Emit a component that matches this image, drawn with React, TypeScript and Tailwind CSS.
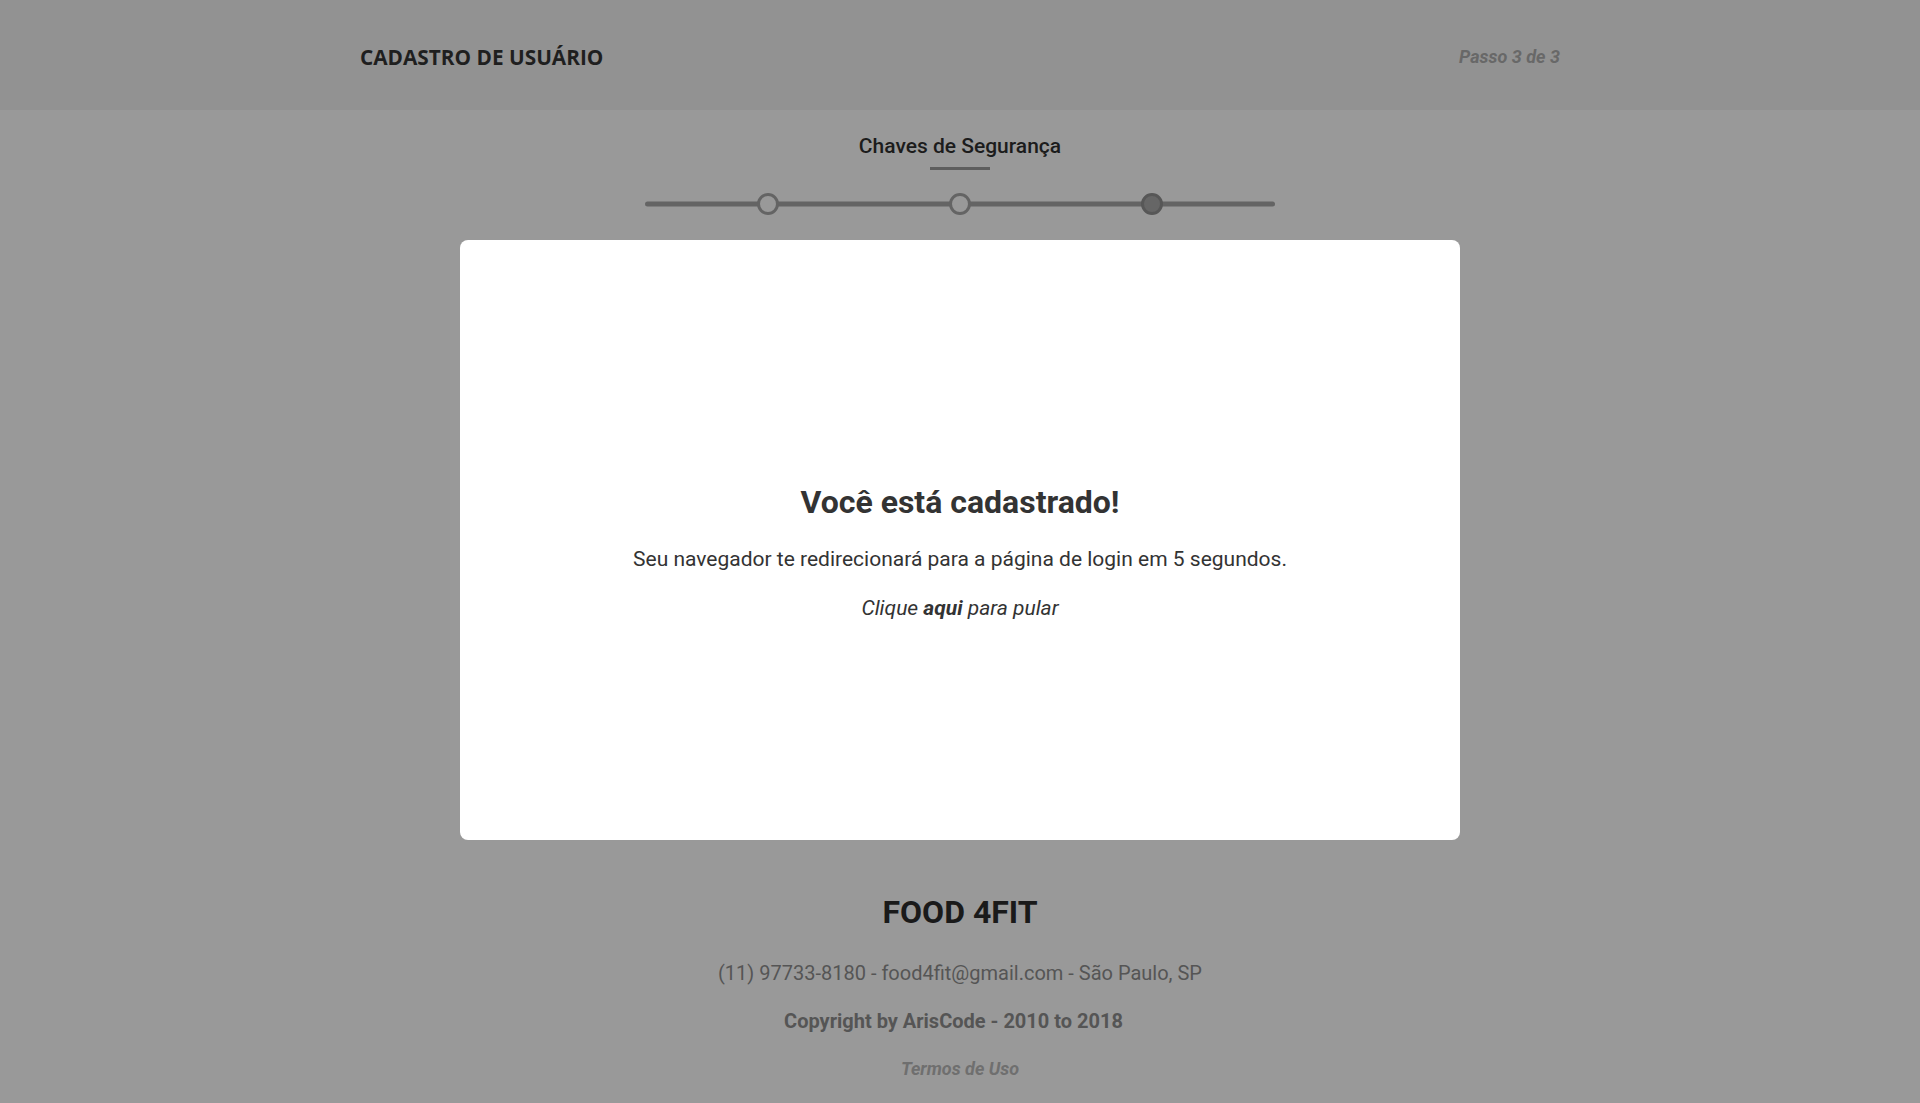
const Step = ({ filled }: { filled?: boolean }) => (
  <span
    className={
      filled
        ? "block h-[22px] w-[22px] rounded-full border-[3px] border-[#575757] bg-[#666666]"
        : "block h-[22px] w-[22px] rounded-full border-[3px] border-[#646464] bg-[#999999]"
    }
  ></span>
);

const App = () => {
  return (
    <div className="min-h-[1103px] bg-[#999999] font-['Roboto',sans-serif]">
      <header className="h-[110px] bg-[#929292]">
        <div className="mx-auto flex h-full max-w-[1200px] items-center justify-between pt-[3px]">
          <h1 className="pt-[2px] font-['Open_Sans',sans-serif] text-[20.8px] font-bold text-[#1f1f1f]">
            CADASTRO DE USUÁRIO
          </h1>
          <span className="text-[18px] font-bold italic text-[#686868]">Passo 3 de 3</span>
        </div>
      </header>

      <main className="flex flex-col items-center">
        <h2 className="mt-[24px] text-[21px] leading-[24px] font-medium text-[#1c1c1c]">
          Chaves de Segurança
        </h2>
        <span className="mt-[9px] block h-[3px] w-[60px] bg-[#5e5e5e]"></span>

        <div className="relative mt-[23px] flex h-[22px] w-[630px] items-center gap-[170px] px-[112px]">
          <span className="absolute inset-x-0 top-1/2 h-[5px] -translate-y-1/2 rounded-full bg-[#646464]"></span>
          <div className="relative">
            <Step />
          </div>
          <div className="relative">
            <Step />
          </div>
          <div className="relative">
            <Step filled />
          </div>
        </div>

        <div className="mt-[25px] flex h-[600px] w-[1000px] flex-col items-center rounded-lg bg-white pt-[242px] text-[#333333]">
          <h3 className="text-[32px] leading-[40px] font-bold">Você está cadastrado!</h3>
          <p className="mt-[23px] text-[21px] leading-[28px]">
            Seu navegador te redirecionará para a página de login em 5 segundos.
          </p>
          <p className="mt-[21px] text-[21px] leading-[28px] italic">
            Clique <span className="font-bold">aqui</span> para pular
          </p>
        </div>
      </main>

      <footer className="flex flex-col items-center pb-[21px]">
        <h4 className="mt-[52px] text-[32px] leading-[40px] font-bold text-[#1a1a1a]">FOOD 4FIT</h4>
        <p className="mt-[27px] text-[20px] leading-[28px] text-[#555555]">
          (11) 97733-8180 - food4fit@gmail.com - São Paulo, SP
        </p>
        <p className="mt-[20px] pr-[13px] text-[20px] leading-[28px] font-bold text-[#555555]">
          Copyright by ArisCode - 2010 to 2018
        </p>
        <a className="mt-[22px] text-[18px] leading-[24px] font-bold italic text-[#6f6f6f]">Termos de Uso</a>
      </footer>
    </div>
  );
};

export default App;
